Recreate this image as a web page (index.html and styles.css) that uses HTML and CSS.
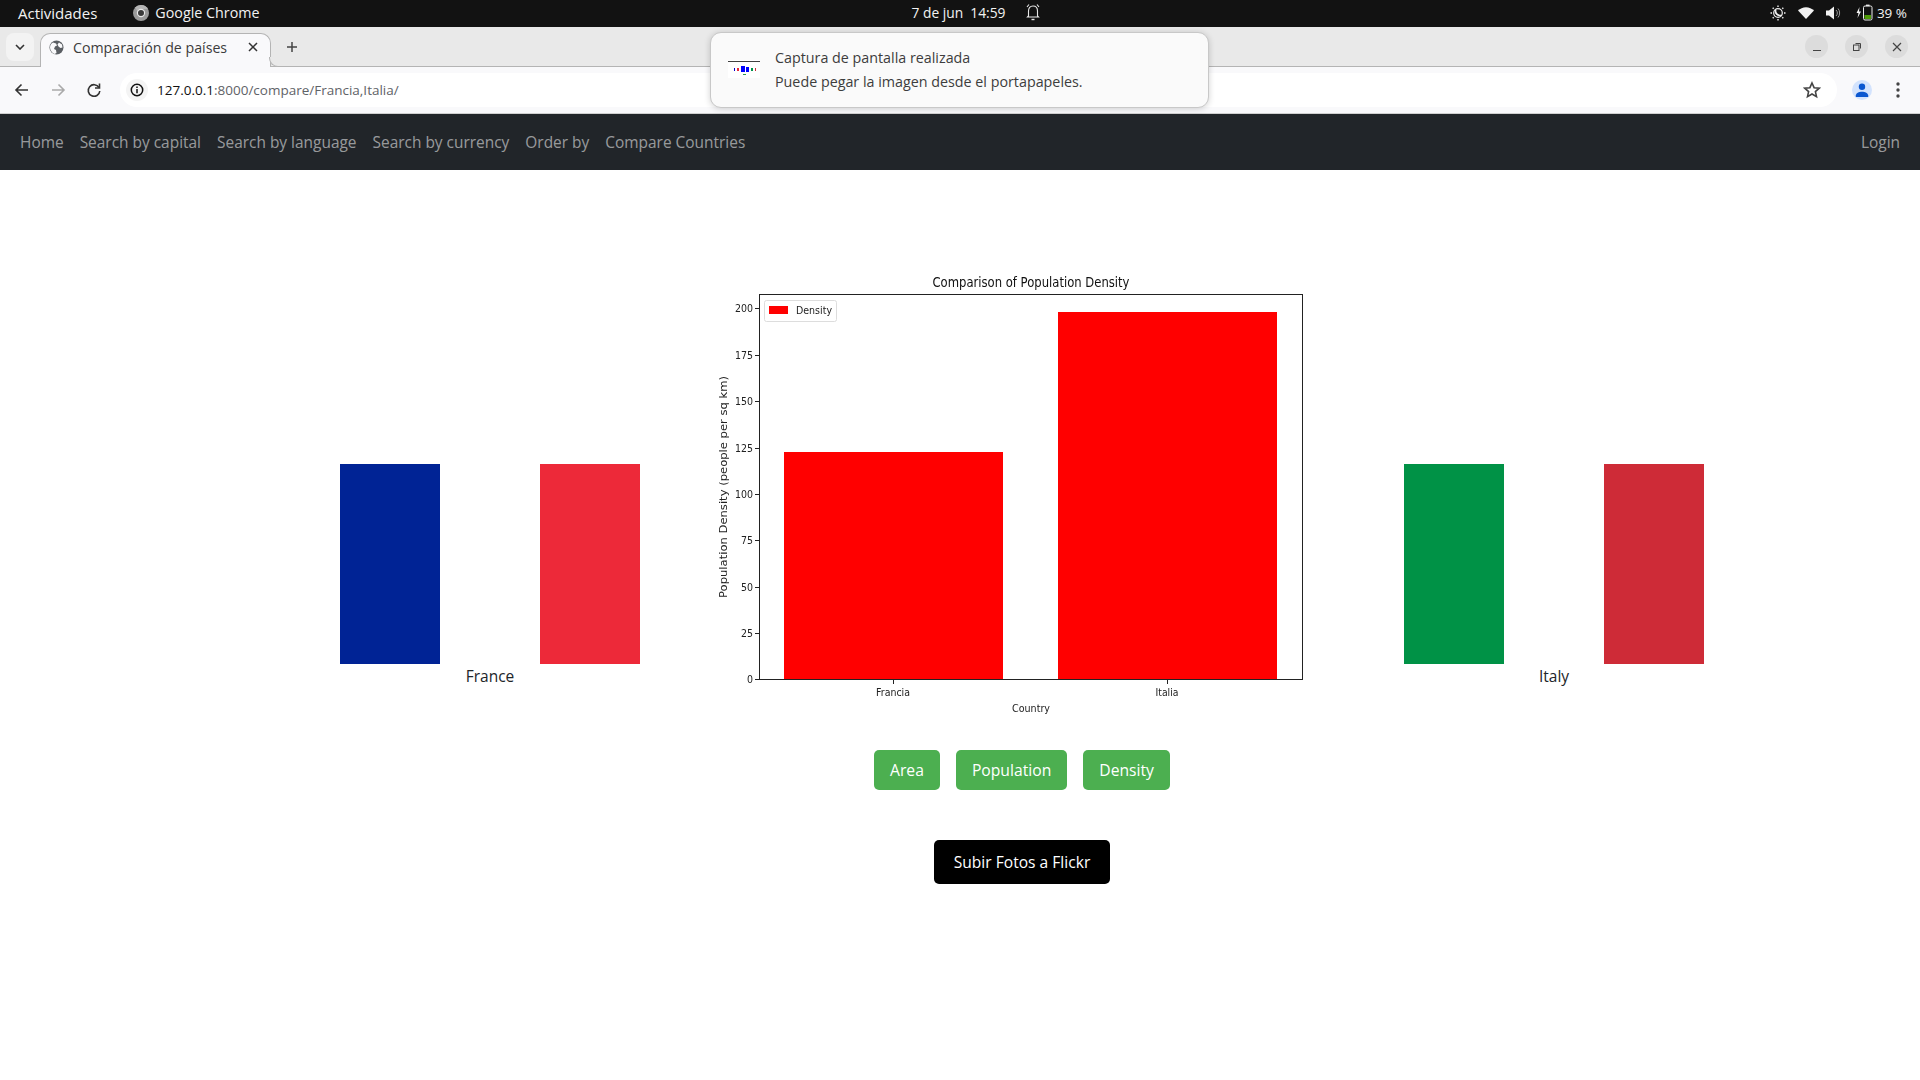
FILE: index.html
```html
<!DOCTYPE html>
<html>
<head>
<meta charset="utf-8">
<title>Comparación de países</title>
<link rel="stylesheet" href="styles.css">
</head>
<body>

<!-- desktop bar -->
<div class="topbar">
  <div class="topbar-left">
    <span class="activities">Actividades</span>
    <svg class="chrome-logo" width="16" height="16" viewBox="0 0 16 16"><circle cx="8" cy="8" r="8" fill="#9a9a9a"/><path d="M8 0a8 8 0 0 1 7 4H8a4 4 0 0 0-3.6 2.2L2 2.6A8 8 0 0 1 8 0z" fill="#b5b5b5"/><circle cx="8" cy="8" r="3.6" fill="#3a3a3a" stroke="#e8e8e8" stroke-width="1.2"/></svg>
    <span>Google Chrome</span>
  </div>
  <div class="topbar-center">
    <span>7 de jun&nbsp; 14:59</span>
    <svg class="bell" width="14" height="18" viewBox="0 0 14 18" fill="none" stroke="#e8e8e8" stroke-width="1.1"><path d="M2.5 13V8c0-3 1.6-5 4.500-5s4.500 2 4.500 5v5l1 1H1.500z"/><path d="M3 1.500 1 4M11 1.500 13 4"/><path d="M5.500 16.500h3" stroke-width="1.400"/></svg>
  </div>
  <div class="topbar-right">
    <svg width="16" height="16" viewBox="0 0 16 16" fill="none" stroke="#eee" stroke-width="1.200"><circle cx="8" cy="8" r="4.300"/><path d="M6 4.500a4 4 0 0 0 5.500 5.500A4.300 4.300 0 0 1 6 4.500z" fill="#eee"/><path d="M8 .5v1.500M8 14v1.500M.5 8H2M14 8h1.500M2.700 2.700l1 1M12.300 12.300l1 1M2.700 13.300l1-1M12.300 3.700l1-1" stroke-width="1.400"/></svg>
    <svg class="wifi" width="16" height="12" viewBox="0 0 16 12"><path d="M0 3.500C2 1.500 5 .2 8 .2s6 1.300 8 3.300L8 12z" fill="#f2f2f2"/></svg>
    <svg class="volume" width="15" height="14" viewBox="0 0 15 14"><path d="M0 4.500h3L8 .5v13l-5-4H0z" fill="#f2f2f2"/><path d="M10 4a4 4 0 0 1 0 6M12 2.500a7 7 0 0 1 0 9" fill="none" stroke="#999" stroke-width="1"/></svg>
    <svg class="battery" width="17" height="17" viewBox="0 0 17 17"><path d="M3.500 3 .5 9h2L1.500 14 5 7.500H3z" fill="#f2f2f2"/><rect x="7.500" y="2" width="8.500" height="14" rx="1.500" fill="none" stroke="#eee" stroke-width="1"/><rect x="10" y=".6" width="3.500" height="1.500" fill="#eee"/><rect x="8.500" y="11" width="6.500" height="4" fill="#4e9a06"/></svg>
    <span class="battery-text">39 %</span>
  </div>
</div>

<!-- browser chrome -->
<div class="tabstrip">
  <div class="tab-search"><svg width="10" height="6" viewBox="0 0 10 6" fill="none" stroke="#333" stroke-width="1.600"><path d="M1 1l4 4 4-4"/></svg></div>
  <div class="tab">
    <svg width="15" height="15" viewBox="0 0 15 15"><circle cx="7.500" cy="7.500" r="7" fill="#5a5e63"/><path d="M4 2.500l3 1 1 2-2 1-1 2.500 2 1 .5 3-2 1C3 13 1 10 1 7.500 1 5 2.500 3 4 2.500zM10 2.500l3 2 .5 3-2 .5-2-1.500-1-2z" fill="#f9f9fb"/></svg>
    <span class="tab-title">Comparación de países</span>
    <svg class="tab-close" width="10" height="10" viewBox="0 0 10 10" stroke="#333" stroke-width="1.500"><path d="M1 1l8 8M9 1l-8 8"/></svg>
  </div>
  <svg class="new-tab" width="12" height="12" viewBox="0 0 12 12" stroke="#444" stroke-width="1.500"><path d="M6 1v10M1 6h10"/></svg>
  <div class="window-btns">
    <span class="win-btn"><svg width="10" height="10" viewBox="0 0 10 10" stroke="#444" stroke-width="1"><path d="M1 8.500h8"/></svg></span>
    <span class="win-btn"><svg width="10" height="10" viewBox="0 0 10 10" fill="none" stroke="#444" stroke-width="1"><rect x="1.500" y="3" width="5.500" height="5.500"/><path d="M3.500 1.500h5v5"/></svg></span>
    <span class="win-btn"><svg width="10" height="10" viewBox="0 0 10 10" stroke="#444" stroke-width="1.200"><path d="M1 1l8 8M9 1l-8 8"/></svg></span>
  </div>
</div>
<div class="toolbar">
  <svg class="tool-icon" width="16" height="16" viewBox="0 0 16 16" fill="none" stroke="#333" stroke-width="1.600"><path d="M14 8H2.500M7.500 2.500 2 8l5.500 5.500"/></svg>
  <svg class="tool-icon" width="16" height="16" viewBox="0 0 16 16" fill="none" stroke="#aaa" stroke-width="1.600"><path d="M2 8h11.500M8.500 2.500 14 8l-5.500 5.500"/></svg>
  <svg class="tool-icon" width="16" height="16" viewBox="0 0 16 16" fill="none" stroke="#333" stroke-width="1.600"><path d="M13 5.500A5.800 5.800 0 1 0 13.800 9"/><path d="M13.500 1.500v4.500H9" /></svg>
  <div class="omnibox">
    <span class="info-chip"><svg width="14" height="14" viewBox="0 0 14 14"><circle cx="7" cy="7" r="5.700" fill="none" stroke="#111" stroke-width="1.500"/><path d="M7 6v4.200M7 3.500v1.500" stroke="#111" stroke-width="1.500"/></svg></span>
    <span class="url"><b>127.0.0.1</b>:8000/compare/Francia,Italia/</span>
    <svg class="star" width="18" height="18" viewBox="0 0 18 18" fill="none" stroke="#444" stroke-width="1.600"><path d="M9 2l2.100 4.700 5.100.5-3.800 3.400 1.100 5L9 13l-4.500 2.600 1.100-5L1.800 7.200l5.100-.5z"/></svg>
  </div>
  <span class="avatar"><svg width="14" height="14" viewBox="0 0 14 14" fill="#0b57d0"><circle cx="7" cy="3.700" r="3.200"/><path d="M.8 14v-1.500C.8 10 4 8.700 7 8.700s6.200 1.300 6.200 3.800V14z"/></svg></span>
  <svg class="kebab" width="4" height="16" viewBox="0 0 4 16" fill="#444"><circle cx="2" cy="2" r="1.700"/><circle cx="2" cy="8" r="1.700"/><circle cx="2" cy="14" r="1.700"/></svg>
</div>

<!-- notification from the desktop, lies over the browser -->
<div class="notice">
  <svg class="notice-thumb" width="32" height="18" viewBox="0 0 32 18"><rect width="32" height="18" fill="#fff"/><rect y="1" width="32" height=".8" fill="#111"/><rect x="6" y="8" width="1" height="3" fill="#0000d0"/><rect x="9" y="8" width="2" height="3" fill="#e8293c"/><rect x="13" y="6" width="4" height="6" fill="#0000ff"/><rect x="18" y="7" width="3" height="5" fill="#0000ff"/><rect x="23" y="8" width="2" height="3" fill="#00924a"/><rect x="27" y="8" width="1" height="3" fill="#cc2b38"/><rect x="15" y="14" width="3" height="1" fill="#2a9a50"/></svg>
  <div>
    <div class="notice-title">Captura de pantalla realizada</div>
    <div class="notice-body">Puede pegar la imagen desde el portapapeles.</div>
  </div>
</div>

<!-- site navbar -->
<nav class="navbar">
  <a href="#">Home</a>
  <a href="#">Search by capital</a>
  <a href="#">Search by language</a>
  <a href="#">Search by currency</a>
  <a href="#">Order by</a>
  <a href="#">Compare Countries</a>
  <a href="#" class="login">Login</a>
</nav>

<div class="content">
  <div class="compare-row">
    <div class="country">
      <div class="flag"><span class="fr-blue"></span><span></span><span class="fr-red"></span></div>
      <p>France</p>
    </div>

    <svg class="chart" width="702" height="519" viewBox="0 0 702 519">
      <rect x="113" y="221" width="219" height="227" fill="#ff0000"/>
      <rect x="387" y="81" width="219" height="367" fill="#ff0000"/>
      <rect x="88.500" y="63.500" width="543" height="385" fill="none" stroke="#222" stroke-width="1"/>
      <g stroke="#222" stroke-width="1">
        <path d="M84 448.500h4M84 402.500h4M84 356.500h4M84 309.500h4M84 263.500h4M84 217.500h4M84 170.500h4M84 124.500h4M84 77.500h4"/>
        <path d="M222.500 449v4M496.500 449v4"/>
      </g>
      <rect x="93.500" y="69.500" width="72" height="21" rx="2" fill="#fff" stroke="#ddd"/>
      <rect x="98" y="75" width="19" height="8" fill="#ff0000"/>
      <g class="chart-text">
        <text class="chart-title" x="360" y="56" text-anchor="middle" textLength="197" lengthAdjust="spacingAndGlyphs">Comparison of Population Density</text>
        <text x="125" y="83" textLength="36" lengthAdjust="spacingAndGlyphs">Density</text>
        <text x="82" y="452" text-anchor="end" textLength="6" lengthAdjust="spacingAndGlyphs">0</text>
        <text x="82" y="406" text-anchor="end" textLength="12" lengthAdjust="spacingAndGlyphs">25</text>
        <text x="82" y="360" text-anchor="end" textLength="12" lengthAdjust="spacingAndGlyphs">50</text>
        <text x="82" y="313" text-anchor="end" textLength="12" lengthAdjust="spacingAndGlyphs">75</text>
        <text x="82" y="267" text-anchor="end" textLength="18" lengthAdjust="spacingAndGlyphs">100</text>
        <text x="82" y="221" text-anchor="end" textLength="18" lengthAdjust="spacingAndGlyphs">125</text>
        <text x="82" y="174" text-anchor="end" textLength="18" lengthAdjust="spacingAndGlyphs">150</text>
        <text x="82" y="128" text-anchor="end" textLength="18" lengthAdjust="spacingAndGlyphs">175</text>
        <text x="82" y="81" text-anchor="end" textLength="18" lengthAdjust="spacingAndGlyphs">200</text>
        <text x="222" y="465" text-anchor="middle" textLength="34" lengthAdjust="spacingAndGlyphs">Francia</text>
        <text x="496" y="465" text-anchor="middle" textLength="23" lengthAdjust="spacingAndGlyphs">Italia</text>
        <text x="360" y="481" text-anchor="middle" textLength="38" lengthAdjust="spacingAndGlyphs">Country</text>
        <text class="axis-y" transform="translate(56 256) rotate(-90)" text-anchor="middle" textLength="222" lengthAdjust="spacingAndGlyphs">Population Density (people per sq km)</text>
      </g>
    </svg>

    <div class="country">
      <div class="flag"><span class="it-green"></span><span></span><span class="it-red"></span></div>
      <p>Italy</p>
    </div>
  </div>

  <div class="metric-btns">
    <button type="button">Area</button>
    <button type="button">Population</button>
    <button type="button">Density</button>
  </div>

  <button type="button" class="flickr-btn">Subir Fotos a Flickr</button>
</div>

</body>
</html>
```

FILE: styles.css
```css
* {box-sizing: border-box;}

html, body {margin: 0; height: 100%;}

body {
  background-color: #fff;
  font-family: "Open Sans", "Noto Sans", sans-serif;
  overflow: hidden;
  position: relative;
}

svg {display: block; flex: none;}

/* desktop bar */
.topbar {
  height: 27px;
  background-color: #121212;
  color: #f2f2f2;
  font-size: 14.3px;
  display: flex;
  align-items: center;
  padding: 0 13px 2px 18px;
}

.topbar-left {
  flex: 1;
  display: flex;
  align-items: center;
}

.activities {margin-right: 36px; font-size: 15px;}
.chrome-logo {margin-right: 6px;}

.topbar-center {
  display: flex;
  align-items: center;
  gap: 20px;
  margin-right: 12px;
  margin-left: 38px;
  font-size: 13.8px;
}

.bell {margin-top: -1px;}

.topbar-right {
  flex: 1;
  display: flex;
  justify-content: flex-end;
  align-items: center;
  gap: 12px;
}

.battery {margin-left: 3px; margin-right: -8px;}
.battery-text {font-size: 13.5px;}

/* browser chrome */
.tabstrip {
  height: 40px;
  background-color: #e9e9e9;
  border-bottom: 1px solid #b4b4b4;
  display: flex;
  align-items: flex-start;
  padding: 6px 12px 0 6px;
}

.tab-search {
  width: 28px;
  height: 28px;
  border-radius: 8px;
  background-color: #f3f3f3;
  display: flex;
  align-items: center;
  justify-content: center;
  margin-right: 6px;
}

.tab {
  width: 231px;
  height: 34px;
  background-color: #f9f9fb;
  border: 1px solid #b4b4b4;
  border-bottom: none;
  border-radius: 10px 10px 0 0;
  display: flex;
  align-items: center;
  padding: 0 12px 7px 8px;
  font-size: 14.2px;
  color: #3c3c3c;
  position: relative;
  z-index: 1;
}

.tab::after {
  content: "";
  position: absolute;
  right: -9px;
  bottom: 0;
  width: 9px;
  height: 9px;
  border-left: 1px solid #b4b4b4;
  border-bottom: 1px solid #b4b4b4;
  border-radius: 0 0 0 9px;
  background-color: #e9e9e9;
}

.tab-title {margin-left: 9px; flex: 1;}

.new-tab {margin: 8px 0 0 15px;}

.window-btns {
  margin-left: auto;
  display: flex;
  gap: 17px;
  padding-top: 2px;
}

.win-btn {
  width: 23px;
  height: 23px;
  border-radius: 50%;
  background-color: #dcdcdc;
  display: flex;
  align-items: center;
  justify-content: center;
}

.toolbar {
  height: 47px;
  background-color: #f9f9fb;
  border-bottom: 1px solid #d0d0d0;
  display: flex;
  align-items: center;
  padding: 0 20px 0 14px;
}

.tool-icon {margin-right: 20px;}
.tool-icon:nth-child(3) {margin-right: 18px;}

.omnibox {
  flex: 1;
  height: 34px;
  background-color: #fff;
  border-radius: 17px;
  display: flex;
  align-items: center;
  padding: 0 16px 0 6px;
  font-size: 13.5px;
  color: #5f6368;
}

.url b {font-weight: 400; color: #111;}

.info-chip {
  width: 22px;
  height: 22px;
  border-radius: 50%;
  background-color: #f4f4f4;
  display: flex;
  align-items: center;
  justify-content: center;
  margin-right: 9px;
}

.star {margin-left: auto;}

.avatar {
  width: 20px;
  height: 20px;
  border-radius: 50%;
  background-color: #d3e3fd;
  display: flex;
  align-items: center;
  justify-content: center;
  margin-left: 15px;
  margin-right: 24px;
}

/* notification */
.notice {
  position: absolute;
  left: 710px;
  top: 32px;
  width: 499px;
  height: 76px;
  background-color: #fafafa;
  border: 1px solid #c8c8c8;
  border-radius: 11px;
  box-shadow: 0 1px 6px rgba(0,0,0,.18);
  display: flex;
  align-items: center;
  padding: 0 0 2px 17px;
  color: #3d3d3d;
  font-size: 14.3px;
  z-index: 5;
}

.notice-thumb {margin-right: 15px;}
.notice-title {margin-bottom: 5px;}

/* site navbar */
.navbar {
  height: 56px;
  background-color: #212529;
  display: flex;
  align-items: center;
  padding: 0 20px;
  gap: 16px;
  font-size: 15.45px;
}

.navbar a {
  color: rgba(255,255,255,.55);
  text-decoration: none;
}

.navbar .login {margin-left: auto;}

/* page */
.content {
  display: flex;
  flex-direction: column;
  align-items: center;
  padding: 61px 0 0 124px;
}

.compare-row {
  display: flex;
  gap: 31px;
}

.country {
  width: 300px;
  padding-top: 233px;
  text-align: center;
  font-size: 15.5px;
  color: #212529;
}

.country p {margin: 1px 0 0;}

.flag {
  height: 200px;
  display: flex;
}

.flag span {flex: 1;}

.fr-blue {background-color: #002395;}
.fr-red {background-color: #ed2939;}
.it-green {background-color: #009246;}
.it-red {background-color: #ce2b37;}

.chart-text text {
  font-family: "DejaVu Sans", sans-serif;
  font-size: 11px;
  fill: #222;
}

.chart-text .chart-title {font-size: 14px; fill: #111;}

.chart-text {filter: blur(.25px);}

.metric-btns {
  display: flex;
  gap: 16px;
}

.metric-btns button {
  height: 40px;
  padding: 0 16px;
  background-color: #4CAF50;
  color: #fff;
  border: none;
  border-radius: 5px;
  font-family: inherit;
  font-size: 15.7px;
}

.flickr-btn {
  width: 176px;
  height: 44px;
  margin-top: 50px;
  background-color: #000;
  color: #fff;
  border: none;
  border-radius: 5px;
  font-family: inherit;
  font-size: 15.6px;
}
```
